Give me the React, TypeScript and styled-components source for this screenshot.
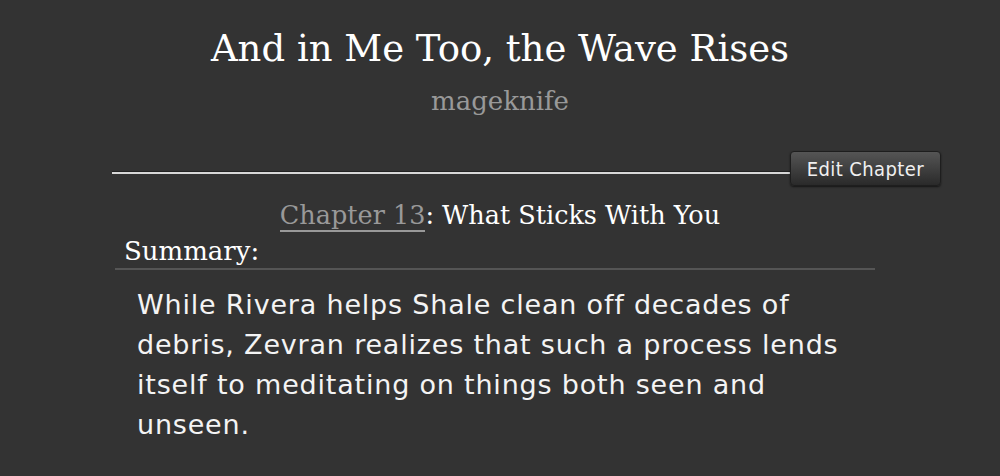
import React from "react";
import styled, { createGlobalStyle } from "styled-components";

const Global = createGlobalStyle`
  html, body { margin: 0; padding: 0; background: #333333; }
  body { width: 1000px; height: 476px; overflow: hidden; }
`;

const Page = styled.div`
  display: flex;
  flex-direction: column;
  padding: 24px 59px 0 112px;
  color: #ffffff;
`;

const Title = styled.h2`
  margin: 0 53px 0 0;
  font-family: "DejaVu Serif", Georgia, serif;
  font-weight: normal;
  font-size: 37px;
  line-height: 50px;
  text-align: center;
`;

const Byline = styled.h3`
  margin: 9px 53px 0 0;
  font-family: "DejaVu Serif", Georgia, serif;
  font-weight: normal;
  font-size: 26px;
  line-height: 36px;
  color: #999999;
  text-align: center;
`;

const Rule = styled.div`
  display: flex;
  align-items: flex-start;
  margin-top: 32px;
`;

const Line = styled.div`
  flex: 1;
  height: 2px;
  margin-top: 21px;
  background: #d8d8d8;
  box-shadow: 0 -1px 0 #222;
`;

const Button = styled.button`
  font-family: "DejaVu Sans Condensed", "DejaVu Sans", sans-serif;
  font-size: 20px;
  letter-spacing: 0.4px;
  color: #f0f0f0;
  height: 35px;
  padding: 0 16px;
  border: 1px solid #1e1e1e;
  border-radius: 4px;
  background: linear-gradient(#555555, #2a2a2a);
  box-shadow: 0 1px 2px rgba(0,0,0,0.6);
`;

const ChapterTitle = styled.h3`
  margin: 11px 53px 0 0;
  font-family: "DejaVu Serif", Georgia, serif;
  font-weight: normal;
  font-size: 25.5px;
  line-height: 36px;
  text-align: center;
`;

const ChapterLink = styled.a`
  color: #999999;
  text-decoration: none;
  border-bottom: 2px solid #999999;
`;

const Summary = styled.div`
  margin: 2px 66px 0 3px;
`;

const SummaryLabel = styled.h3`
  margin: 0;
  padding: 0 0 0 9px;
  font-family: "DejaVu Serif", Georgia, serif;
  font-weight: normal;
  font-size: 26px;
  line-height: 33px;
  border-bottom: 2px solid #555555;
`;

const Body = styled.p`
  margin: 15px 0 0;
  padding-left: 22px;
  font-family: "DejaVu Sans", Verdana, sans-serif;
  font-size: 27px;
  letter-spacing: 0.8px;
  line-height: 40px;
  color: #f4f4f4;
`;

export default function App() {
  return (
    <>
      <Global />
      <Page>
        <Title>And in Me Too, the Wave Rises</Title>
        <Byline>mageknife</Byline>
        <Rule>
          <Line />
          <Button>Edit Chapter</Button>
        </Rule>
        <ChapterTitle>
          <ChapterLink href="#">Chapter 13</ChapterLink>: What Sticks With You
        </ChapterTitle>
        <Summary>
          <SummaryLabel>Summary:</SummaryLabel>
          <Body>
            While Rivera helps Shale clean off decades of debris, Zevran realizes that such a process lends itself to meditating on things both seen and unseen.
          </Body>
        </Summary>
      </Page>
    </>
  );
}
